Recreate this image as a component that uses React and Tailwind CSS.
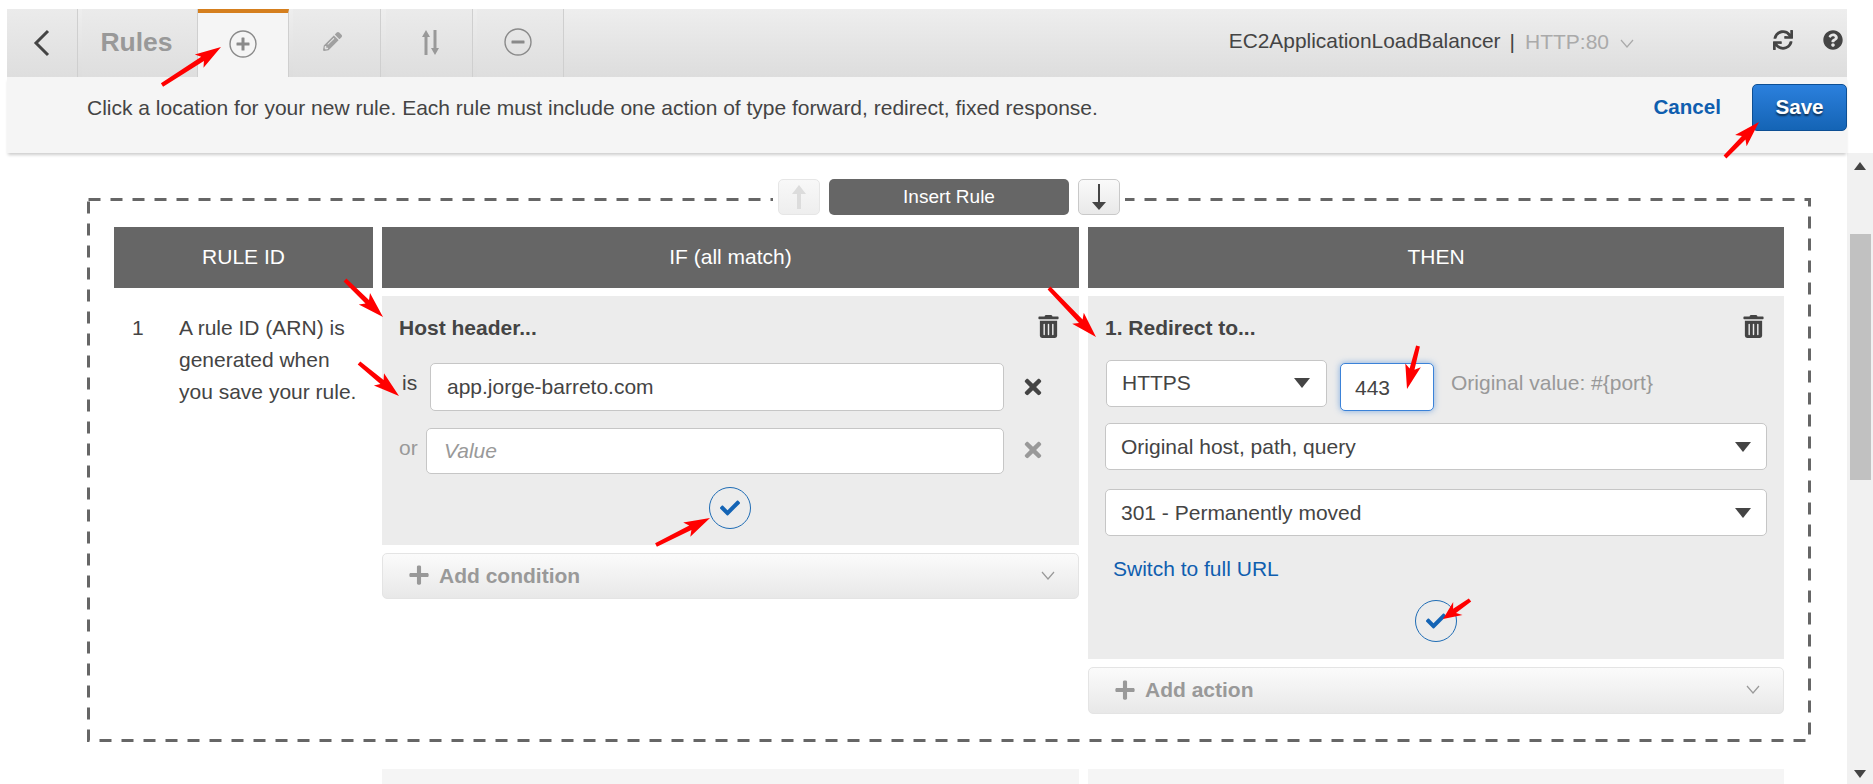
import { FaSync, FaQuestionCircle, FaTrashAlt, FaTimes, FaCheck, FaPencilAlt, FaPlus } from 'react-icons/fa';

const font = { fontFamily: '"Liberation Sans", Arial, sans-serif' };

// red annotation arrows, tail -> tip in page coordinates
const arrows = [
  [162, 85, 221, 47],
  [1725, 157, 1759, 122],
  [345, 280, 383, 317],
  [359, 363, 399, 396],
  [1049, 288, 1096, 337],
  [1418, 346, 1407, 389],
  [656, 545, 710, 518],
  [1470, 600, 1443, 619],
];

function arrowPath([x1, y1, x2, y2]) {
  const len = Math.hypot(x2 - x1, y2 - y1);
  const ux = (x2 - x1) / len;
  const uy = (y2 - y1) / len;
  const at = (along, side) => `${(x1 + ux * along - uy * side).toFixed(1)} ${(y1 + uy * along + ux * side).toFixed(1)}`;
  const head = Math.min(26, len * 0.55);
  return `M${at(0, -2)} L${at(len - head + 4, -2.5)} L${at(len - head, -8)} L${at(len, 0)} L${at(len - head, 8)} L${at(len - head + 4, 2.5)} L${at(0, 2)} Z`;
}

function Tab({ className, children }) {
  return (
    <div className={`h-full flex items-center justify-center border-r border-[#cfcfcf] bg-linear-to-b from-[#ebebeb] to-[#dedede] ${className}`}>
      {children}
    </div>
  );
}

function CircleIcon({ minus, className = '' }) {
  return (
    <svg width="28" height="28" viewBox="0 0 28 28" className={className}>
      <circle cx="14" cy="14" r="13" fill="none" stroke="#8a8a8a" strokeWidth="1.4" />
      <rect x="7.5" y="12.5" width="13" height="3" rx="0.5" fill="#8a8a8a" />
      {!minus && <rect x="12.5" y="7.5" width="3" height="13" rx="0.5" fill="#8a8a8a" />}
    </svg>
  );
}

function Caret({ className = '' }) {
  return (
    <svg width="16" height="10" viewBox="0 0 16 10" className={className}>
      <polygon points="0,0 16,0 8,10" fill="#444444" />
    </svg>
  );
}

function Chevron({ color = '#999999' }) {
  return (
    <svg width="14" height="9" viewBox="0 0 14 9">
      <polyline points="1,1 7,8 13,1" fill="none" stroke={color} strokeWidth="1.2" />
    </svg>
  );
}

function SelectBox({ label, className }) {
  return (
    <div className={`flex items-center justify-between bg-white border border-[#c6c6c6] rounded-[5px] ${className}`}>
      <span>{label}</span>
      <Caret />
    </div>
  );
}

function ConfirmButton({ className = '' }) {
  return (
    <div className={`w-[42px] h-[42px] rounded-full border border-[#1f6cb5] flex items-center justify-center ${className}`}>
      <FaCheck size={20} color="#1464b5" />
    </div>
  );
}

function AddBar({ label, className }) {
  return (
    <div className={`flex items-center justify-between mt-[8px] pl-[25px] pr-[23px] pb-[2px] rounded-[5px] border border-[#e4e4e4] bg-linear-to-b from-[#fbfbfb] to-[#e8e8e8] text-[#999999] font-bold ${className}`}>
      <div className="flex items-center gap-[9px]">
        <FaPlus size={22} color="#999999" />
        <span>{label}</span>
      </div>
      <Chevron />
    </div>
  );
}

export default function App() {
  return (
    <div className="relative w-[1873px] h-[784px] overflow-hidden bg-white flex flex-col text-[21px] leading-none text-[#444444]" style={font}>
      {/* barre du haut */}
      <div className="relative z-10 pt-[9px] pl-[7px] pr-[26px]">
        <div className="flex items-center h-[68px] bg-linear-to-b from-[#eeeeee] to-[#dddddd]">
          <Tab className="w-[71px] mr-[4px]">
            <svg width="18" height="28" viewBox="0 0 18 28">
              <polyline points="15,2 3,14 15,26" fill="none" stroke="#444444" strokeWidth="3" />
            </svg>
          </Tab>
          <Tab className="w-[116px] text-[26.5px] font-bold text-[#999999] pr-[6px] pb-[2px]">Rules</Tab>
          <div className="w-[91px] h-full flex items-center justify-center bg-[#f5f5f5] border-t-4 border-[#d57f1e] border-r border-r-[#cfcfcf] mr-[4px]">
            <CircleIcon className="-mt-[3px]" />
          </div>
          <Tab className="w-[88px] mr-[5px] pr-[8px]">
            <FaPencilAlt size={19} color="#a0a0a0" className="-mt-[3px]" />
          </Tab>
          <Tab className="w-[87px] mr-[4px] pl-[3px]">
            <svg width="18" height="25" viewBox="0 0 18 25" className="-mt-[2px]">
              <polygon points="4,0 8,7 5.5,7 5.5,25 2.5,25 2.5,7 0,7" fill="#999999" />
              <polygon points="13,25 9,18 11.5,18 11.5,0 14.5,0 14.5,18 17,18" fill="#999999" />
            </svg>
          </Tab>
          <Tab className="w-[87px] pr-[4px]">
            <CircleIcon minus className="-mt-[3px]" />
          </Tab>
          <div className="ml-auto flex items-center pr-[4px]">
            <span className="-mt-[3px] text-[20.9px]">EC2ApplicationLoadBalancer</span>
            <span className="ml-[9px] -mt-[3px]">|</span>
            <span className="ml-[10px] text-[#aaaaaa] -mt-[3px]">HTTP:80</span>
            <span className="ml-[11px]"><Chevron color="#aaaaaa" /></span>
            <FaSync size={20} color="#444444" className="ml-[139px] -mt-[6px]" />
            <FaQuestionCircle size={20} color="#444444" className="ml-[30px] -mt-[6px]" />
          </div>
        </div>
        <div className="flex items-center justify-between h-[76px] pl-[80px] bg-[#f5f5f5] shadow-[0_3px_3px_-1px_rgba(0,0,0,0.2)]">
          <span className="-mt-[15px]">Click a location for your new rule. Each rule must include one action of type forward, redirect, fixed response.</span>
          <div className="flex items-center -mt-[15px] text-[20.6px]">
            <span className="font-bold text-[#0f5eaf]">Cancel</span>
            <button className="ml-[31px] w-[95px] h-[47px] rounded-[5px] border border-[#0d4f94] bg-linear-to-b from-[#2b80dd] to-[#1464b5] font-bold text-white [text-shadow:0_2px_2px_rgba(0,0,0,0.6)]">
              Save
            </button>
          </div>
        </div>
      </div>

      <div className="flex flex-1 min-h-0">
        <div className="flex-1 pl-[87px] pt-[45px]">
          {/* zone pointillée */}
          <div className="relative w-[1724px] h-[544px] pt-[29px] pl-[27px]">
            <svg className="absolute left-0 top-0" width="1724" height="544">
              <rect x="1.5" y="1.5" width="1721" height="541" fill="none" stroke="#666666" strokeWidth="3" strokeDasharray="12 10" />
            </svg>
            <div className="absolute left-[686px] -top-[19px] flex gap-[9px] bg-white px-[5px] h-[36px] text-[19px] text-white">
              <div className="w-[42px] h-[36px] flex items-center justify-center rounded-[5px] border border-[#e6e6e6] bg-linear-to-b from-[#f8f8f8] to-[#eeeeee]">
                <svg width="14" height="24" viewBox="0 0 14 24"><polygon points="7,0 14,9 9,9 9,24 5,24 5,9 0,9" fill="#dcdcdc" /></svg>
              </div>
              <div className="w-[240px] h-[36px] flex items-center justify-center rounded-[5px] bg-[#666666] pb-[2px]">Insert Rule</div>
              <div className="w-[42px] h-[36px] flex items-center justify-center rounded-[5px] border border-[#c9c9c9] bg-linear-to-b from-[#fafafa] to-[#e9e9e9]">
                <svg width="14" height="26" viewBox="0 0 14 26"><polygon points="6,0 8,0 8,18 14,18 7,26 0,18 6,18" fill="#444444" /></svg>
              </div>
            </div>

            <div className="relative grid grid-cols-[259px_697px_696px] gap-x-[9px]">
              <div className="h-[61px] flex items-center justify-center bg-[#666666] text-white pb-[2px]">RULE ID</div>
              <div className="h-[61px] flex items-center justify-center bg-[#666666] text-white pb-[2px]">IF (all match)</div>
              <div className="h-[61px] flex items-center justify-center bg-[#666666] text-white pb-[2px]">THEN</div>

              {/* colonne rule id */}
              <div className="flex pt-[16px] pl-[18px] mt-[8px] leading-[32px]">
                <span className="w-[47px]">1</span>
                <span className="w-[180px]">A rule ID (ARN) is generated when you save your rule.</span>
              </div>

              {/* colonne IF */}
              <div className="mt-[8px]">
                <div className="h-[249px] bg-[#ececec] pt-[16px]">
                  <div className="flex items-center justify-between h-[32px] pl-[17px] pr-[19px]">
                    <span className="font-bold pb-[2px]">Host header...</span>
                    <FaTrashAlt size={23} color="#444444" className="-mt-[4px]" />
                  </div>
                  <div className="flex items-center mt-[19px] pl-[20px]">
                    <span className="w-[28px] -mt-[9px]">is</span>
                    <input readOnly value="app.jorge-barreto.com" className="w-[574px] h-[48px] px-[16px] bg-white border border-[#c6c6c6] rounded-[5px]" />
                    <span className="w-[58px] flex justify-center"><FaTimes size={24} color="#444444" /></span>
                  </div>
                  <div className="flex items-center mt-[17px] pl-[17px]">
                    <span className="w-[27px] -mt-[8px] text-[#999999]">or</span>
                    <input readOnly placeholder="Value" className="w-[578px] h-[46px] px-[17px] bg-white border border-[#c6c6c6] rounded-[5px] placeholder:italic placeholder:text-[#999999]" />
                    <span className="w-[58px] flex justify-center -mt-[2px]"><FaTimes size={24} color="#999999" /></span>
                  </div>
                  <ConfirmButton className="mt-[13px] ml-[327px]" />
                </div>
                <AddBar label="Add condition" className="h-[46px]" />
              </div>

              {/* colonne THEN */}
              <div className="mt-[8px]">
                <div className="h-[363px] bg-[#ececec] pt-[16px] pl-[17px]">
                  <div className="flex items-center justify-between h-[32px] pr-[19px]">
                    <span className="font-bold pb-[2px]">1. Redirect to...</span>
                    <FaTrashAlt size={23} color="#444444" className="-mt-[4px]" />
                  </div>
                  <div className="flex items-start mt-[16px] pl-[1px]">
                    <SelectBox label="HTTPS" className="w-[221px] h-[47px] pl-[15px] pr-[16px] pb-[2px]" />
                    <input readOnly value="443" className="w-[94px] h-[48px] mt-[3px] ml-[13px] px-[14px] pt-[1px] bg-white border border-[#3b82d8] rounded-[5px] shadow-[0_0_6px_rgba(59,130,216,0.6)]" />
                    <span className="ml-[17px] mt-[12px] text-[#999999]">Original value: #{'{'}port{'}'}</span>
                  </div>
                  <SelectBox label="Original host, path, query" className="w-[662px] h-[47px] mt-[12px] pl-[15px] pr-[15px]" />
                  <SelectBox label="301 - Permanently moved" className="w-[662px] h-[47px] mt-[19px] pl-[15px] pr-[15px]" />
                  <div className="mt-[22px] ml-[8px] text-[#0f5eaf]">Switch to full URL</div>
                  <ConfirmButton className="mt-[21px] ml-[310px]" />
                </div>
                <AddBar label="Add action" className="h-[47px]" />
              </div>
            </div>
          </div>

          {/* règle suivante */}
          <div className="flex gap-[9px] mt-[27px] ml-[295px]">
            <div className="w-[697px] h-[15px] bg-[#f5f5f5]" />
            <div className="w-[696px] h-[15px] bg-[#f5f5f5]" />
          </div>
        </div>

        {/* scrollbar */}
        <div className="w-[26px] flex flex-col items-center bg-[#f1f1f1] pt-[9px] pb-[6px]">
          <svg width="12" height="8" viewBox="0 0 12 8"><polygon points="6,0 12,8 0,8" fill="#444444" /></svg>
          <div className="w-[21px] h-[246px] mt-[64px] bg-[#c1c1c1]" />
          <svg width="12" height="8" viewBox="0 0 12 8" className="mt-auto"><polygon points="0,0 12,0 6,8" fill="#444444" /></svg>
        </div>
      </div>

      {/* flèches rouges */}
      <svg className="absolute left-0 top-0 z-20 pointer-events-none" width="1873" height="784">
        {arrows.map((a, i) => (
          <path key={i} d={arrowPath(a)} fill="#ff0000" />
        ))}
      </svg>
    </div>
  );
}
